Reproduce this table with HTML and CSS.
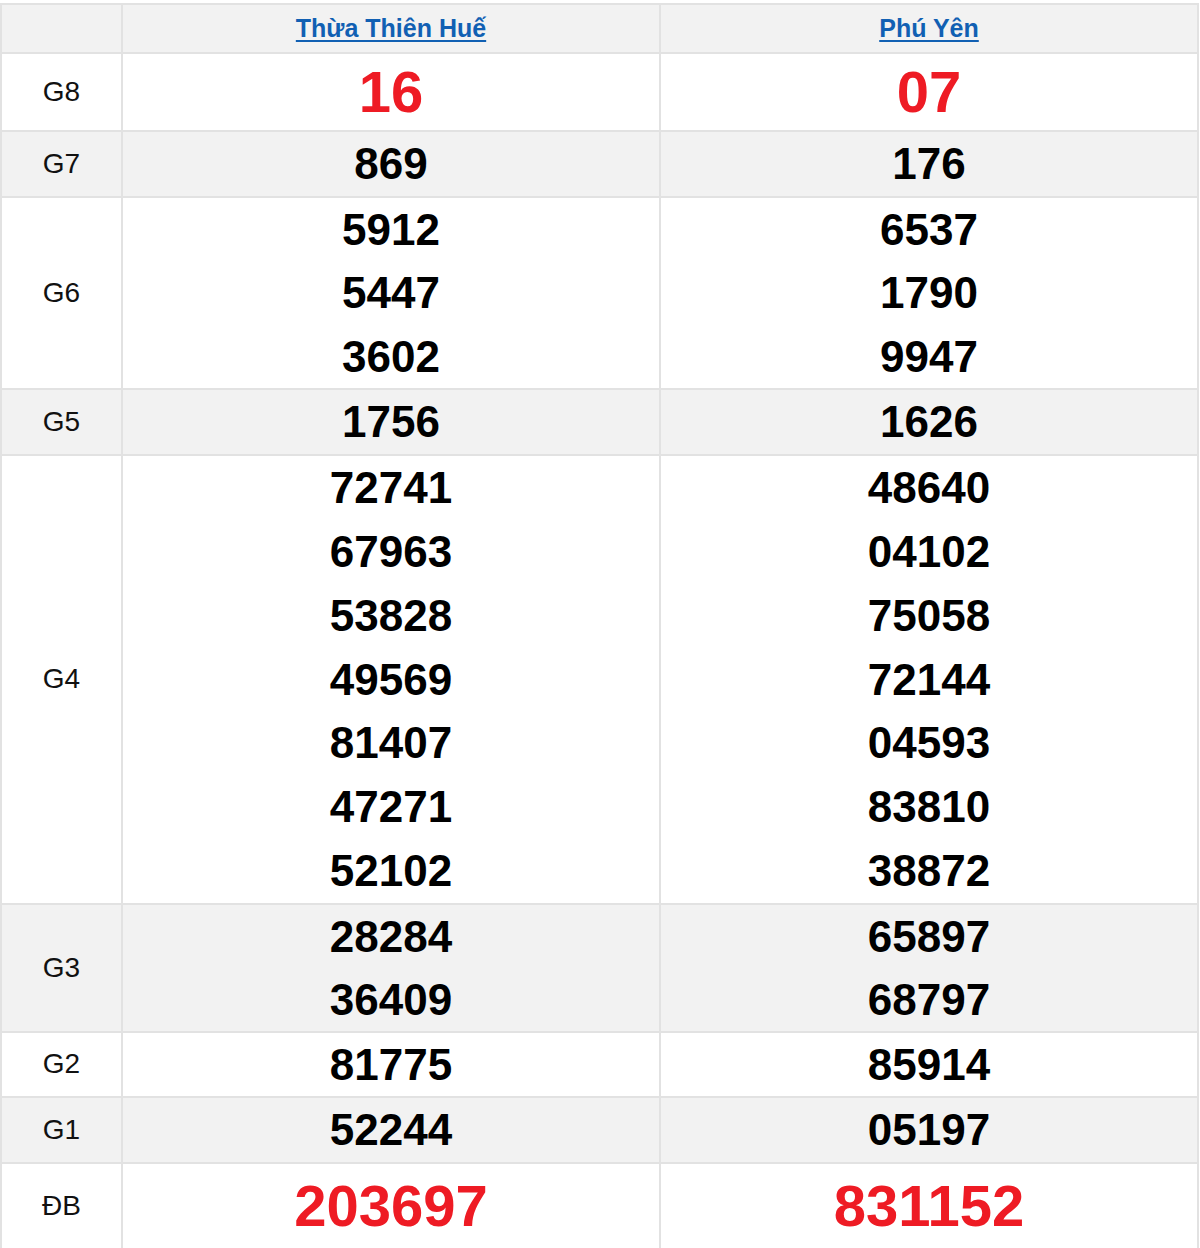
FILE: index.html
```html
<!DOCTYPE html>
<html lang="vi">
<head>
<meta charset="utf-8">
<title>Kết quả xổ số</title>
<link rel="stylesheet" href="styles.css">
</head>
<body>
<table class="kq">
  <colgroup>
    <col class="c-label">
    <col class="c-prov">
    <col class="c-prov">
  </colgroup>
  <thead>
    <tr class="hdr">
      <th></th>
      <th><a href="#">Thừa Thiên Huế</a></th>
      <th><a href="#">Phú Yên</a></th>
    </tr>
  </thead>
  <tbody>
    <tr class="g8">
      <td class="lbl">G8</td>
      <td><div class="n red">16</div></td>
      <td><div class="n red">07</div></td>
    </tr>
    <tr class="alt r1">
      <td class="lbl">G7</td>
      <td><div class="n">869</div></td>
      <td><div class="n">176</div></td>
    </tr>
    <tr class="r6">
      <td class="lbl">G6</td>
      <td><div class="n">5912</div><div class="n">5447</div><div class="n">3602</div></td>
      <td><div class="n">6537</div><div class="n">1790</div><div class="n">9947</div></td>
    </tr>
    <tr class="alt r1">
      <td class="lbl">G5</td>
      <td><div class="n">1756</div></td>
      <td><div class="n">1626</div></td>
    </tr>
    <tr class="r4">
      <td class="lbl">G4</td>
      <td>
        <div class="n">72741</div><div class="n">67963</div><div class="n">53828</div><div class="n">49569</div><div class="n">81407</div><div class="n">47271</div><div class="n">52102</div>
      </td>
      <td>
        <div class="n">48640</div><div class="n">04102</div><div class="n">75058</div><div class="n">72144</div><div class="n">04593</div><div class="n">83810</div><div class="n">38872</div>
      </td>
    </tr>
    <tr class="alt r3">
      <td class="lbl">G3</td>
      <td><div class="n">28284</div><div class="n">36409</div></td>
      <td><div class="n">65897</div><div class="n">68797</div></td>
    </tr>
    <tr class="r2">
      <td class="lbl">G2</td>
      <td><div class="n">81775</div></td>
      <td><div class="n">85914</div></td>
    </tr>
    <tr class="alt r1">
      <td class="lbl">G1</td>
      <td><div class="n">52244</div></td>
      <td><div class="n">05197</div></td>
    </tr>
    <tr class="db">
      <td class="lbl">ĐB</td>
      <td><div class="n red">203697</div></td>
      <td><div class="n red">831152</div></td>
    </tr>
  </tbody>
</table>
</body>
</html>
```
FILE: styles.css
```css
html, body {
  margin: 0;
  padding: 0;
  background: #ffffff;
}

body {
  padding-top: 3px;
  font-family: "Liberation Sans", Arial, sans-serif;
}

.kq {
  width: 1198px;
  border-collapse: collapse;
  table-layout: fixed;
}

.c-label { width: 121px; }
.c-prov { width: 538px; }

.kq th,
.kq td {
  border: 2px solid #e2e2e2;
  padding: 0;
  text-align: center;
  vertical-align: middle;
}

.hdr th {
  height: 47px;
  background: #f2f2f2;
  font-weight: bold;
  font-size: 25px;
}

.hdr a {
  color: #1160b3;
  text-decoration: underline;
  text-decoration-thickness: 2px;
  text-underline-offset: 3px;
}

.lbl {
  font-size: 28px;
  color: #111;
}

.alt td {
  background: #f2f2f2;
}

.n {
  font-weight: bold;
  font-size: 44px;
  line-height: 64px;
  color: #000;
}

.r6 .n { line-height: 63.33px; }
.r4 .n { line-height: 63.85px; }
.r3 .n { line-height: 63px; }
.r2 .n { line-height: 63px; }

.g8 td { height: 76px; }
.db td { height: 84px; }

.n.red {
  color: #ee1b24;
  font-size: 58px;
  line-height: 76px;
}
```
